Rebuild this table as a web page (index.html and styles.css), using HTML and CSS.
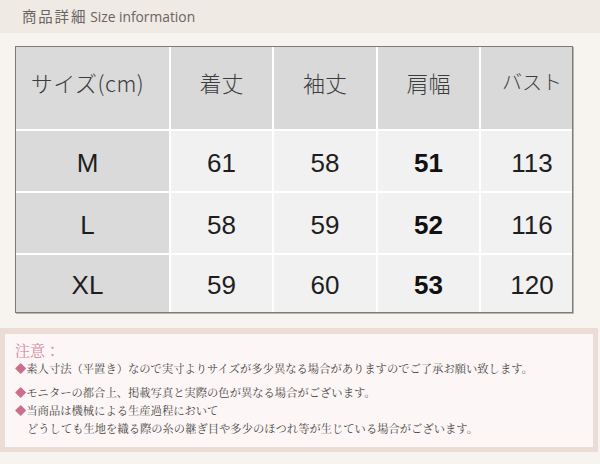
FILE: index.html
```html
<!DOCTYPE html>
<html lang="ja">
<head>
<meta charset="utf-8">
<title>商品詳細 Size information</title>
<link rel="stylesheet" href="styles.css">
</head>
<body>
<header class="title-bar">
  <h1 class="title"><span class="title-ja">商品詳細</span> <span class="title-en">Size information</span></h1>
</header>
<main class="content">
  <section class="size-table">
    <div class="cell head first">サイズ(cm)</div>
    <div class="cell head">着丈</div>
    <div class="cell head">袖丈</div>
    <div class="cell head">肩幅</div>
    <div class="cell head last">バスト</div>

    <div class="cell size first">M</div>
    <div class="cell num">61</div>
    <div class="cell num">58</div>
    <div class="cell num bold">51</div>
    <div class="cell num last">113</div>

    <div class="cell size first">L</div>
    <div class="cell num">58</div>
    <div class="cell num">59</div>
    <div class="cell num bold">52</div>
    <div class="cell num last">116</div>

    <div class="cell size first">XL</div>
    <div class="cell num">59</div>
    <div class="cell num">60</div>
    <div class="cell num bold">53</div>
    <div class="cell num last">120</div>
  </section>
</main>
<section class="notes">
  <p class="notes-title">注意：</p>
  <p class="note gap"><span class="mark">◆</span>素人寸法（平置き）なので実寸よりサイズが多少異なる場合がありますのでご了承お願い致します。</p>
  <p class="note"><span class="mark">◆</span>モニターの都合上、掲載写真と実際の色が異なる場合がございます。</p>
  <p class="note"><span class="mark">◆</span>当商品は機械による生産過程において<br><span class="indent">どうしても生地を織る際の糸の継ぎ目や多少のほつれ等が生じている場合がございます。</span></p>
</section>
</body>
</html>
```

FILE: styles.css
```css
html, body {
  margin: 0;
  padding: 0;
}
body {
  width: 600px;
  height: 464px;
  overflow: hidden;
  background: #f7f4f0;
  font-family: "Noto Sans CJK JP", sans-serif;
}
.title-bar {
  height: 33px;
  background: #efeae4;
  padding: 0 0 0 22px;
  box-sizing: border-box;
}
.title {
  margin: 0;
  padding-top: 6px;
  font-size: 13px;
  font-weight: normal;
  color: #6a6462;
  line-height: 20px;
  white-space: nowrap;
}
.title-ja {
  font-family: "Noto Sans CJK JP", sans-serif;
  font-size: 14.5px;
  letter-spacing: 1.8px;
}
.title-en {
  font-family: "Open Sans", "Liberation Sans", sans-serif;
  font-size: 13.8px;
}
.content {
  padding: 13px 27px 0 15px;
}
.size-table {
  display: grid;
  grid-template-columns: 153px 101px 102px 101px 91px;
  grid-template-rows: 82px 60px 60px 57px;
  gap: 2px;
  width: 558px;
  box-sizing: border-box;
  background: #ffffff;
  border: 1px solid #7b7b7b;
  box-shadow: 1px 1px 0 #b9b6b2;
}
.cell {
  display: flex;
  align-items: center;
  justify-content: center;
  background: #f1f1f1;
  color: #1e1e1e;
}
.cell.head {
  background: #d9d9d9;
  color: #3c3c3c;
  font-family: "Noto Sans CJK JP", sans-serif;
  font-weight: 300;
  font-size: 22px;
  padding-bottom: 13px;
  box-sizing: border-box;
}
.cell.first {
  background: #dadada;
  padding-right: 10px;
  box-sizing: border-box;
}
.cell.last {
  padding-left: 11px;
  box-sizing: border-box;
}
.cell.head.first {
  font-size: 22px;
  letter-spacing: 0.5px;
}
.cell.head.last {
  font-size: 20px;
}
.cell.size,
.cell.num {
  font-family: "Liberation Sans", Arial, sans-serif;
  font-size: 26px;
  padding-top: 4px;
  box-sizing: border-box;
}
.cell.bold {
  font-weight: bold;
  color: #111;
}
.notes {
  margin: 15px 2px 0 0;
  border: 5px solid #ebdcd6;
  border-top-width: 6px;
  background: #fcf7f6;
  padding: 7px 0 10px 10px;
  font-family: "Noto Serif CJK JP", "Noto Sans CJK JP", serif;
  color: #4a4644;
}
.notes p {
  margin: 0;
}
.notes-title {
  font-size: 15px;
  line-height: 18px;
  color: #d48aa0;
}
.note {
  font-size: 11.3px;
  line-height: 18px;
  white-space: nowrap;
}
.note.gap {
  margin-bottom: 6px;
}
.mark {
  color: #cc6f8c;
  font-size: 11.3px;
}
.indent {
  padding-left: 12px;
}
```
